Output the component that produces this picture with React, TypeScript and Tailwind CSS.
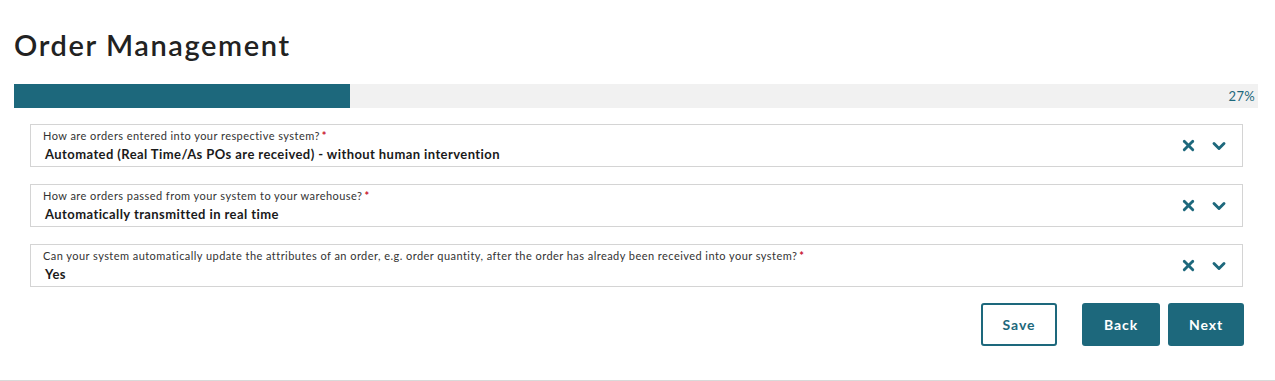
import { X, ChevronDown } from 'lucide-react'

const questions = [
  {
    label: 'How are orders entered into your respective system?',
    value: 'Automated (Real Time/As POs are received) - without human intervention',
  },
  {
    label: 'How are orders passed from your system to your warehouse?',
    value: 'Automatically transmitted in real time',
  },
  {
    label:
      'Can your system automatically update the attributes of an order, e.g. order quantity, after the order has already been received into your system?',
    value: 'Yes',
  },
]

const progress = 27

export default function App() {
  return (
    <div
      className="w-[1275px] h-[381px] bg-white border-b border-[#d9d9d9] overflow-hidden"
      style={{ fontFamily: 'Lato, "Open Sans", sans-serif' }}
    >
      <h1 className="pl-[14px] pt-[27px] text-[29px] leading-[36px] font-semibold text-[#222] tracking-[1.6px]">
        Order Management
      </h1>

      {/* progress */}
      <div className="mt-[21px] ml-[14px] w-[1244px] h-[24px] bg-[#f1f1f1] flex items-center relative">
        <div className="h-full bg-[#1d687c]" style={{ width: `${progress}%` }} />
        <span className="absolute right-[3px] top-[5px] text-[13px] leading-[14px] text-[#1d687c] tracking-[0.3px]">
          {progress}%
        </span>
      </div>

      <div className="mt-[16px] ml-[30px] w-[1213px] flex flex-col gap-[17px]">
        {questions.map((q) => (
          <div
            key={q.label}
            className="h-[43px] border border-[#d4d4d4] flex items-center pl-[12px] pr-[13px]"
          >
            <div className="flex-1 flex flex-col">
              <span className="text-[11px] leading-[13px] text-[#333] tracking-[0.45px]">
                {q.label}
                <span className="text-[#c8102e] ml-[2px] font-bold">*</span>
              </span>
              <span className="mt-[5px] ml-[2px] text-[13px] leading-[15px] font-bold text-[#1a1a1a] tracking-[0.42px]">
                {q.value}
              </span>
            </div>
            <div className="flex items-center gap-[12px] text-[#1d687c]">
              <X size={17} strokeWidth={4} />
              <ChevronDown size={20} strokeWidth={3.5} />
            </div>
          </div>
        ))}
      </div>

      <div className="mt-[16px] w-[1244px] flex justify-end">
        <button className="w-[76px] h-[43px] rounded-[3px] border-2 border-[#1d687c] text-[#1d687c] text-[14px] font-bold tracking-[0.9px] bg-white">
          Save
        </button>
        <button className="ml-[25px] w-[78px] h-[43px] rounded-[3px] bg-[#1d687c] text-white text-[14px] font-bold tracking-[0.9px]">
          Back
        </button>
        <button className="ml-[8px] w-[76px] h-[43px] rounded-[3px] bg-[#1d687c] text-white text-[14px] font-bold tracking-[0.9px]">
          Next
        </button>
      </div>
    </div>
  )
}
